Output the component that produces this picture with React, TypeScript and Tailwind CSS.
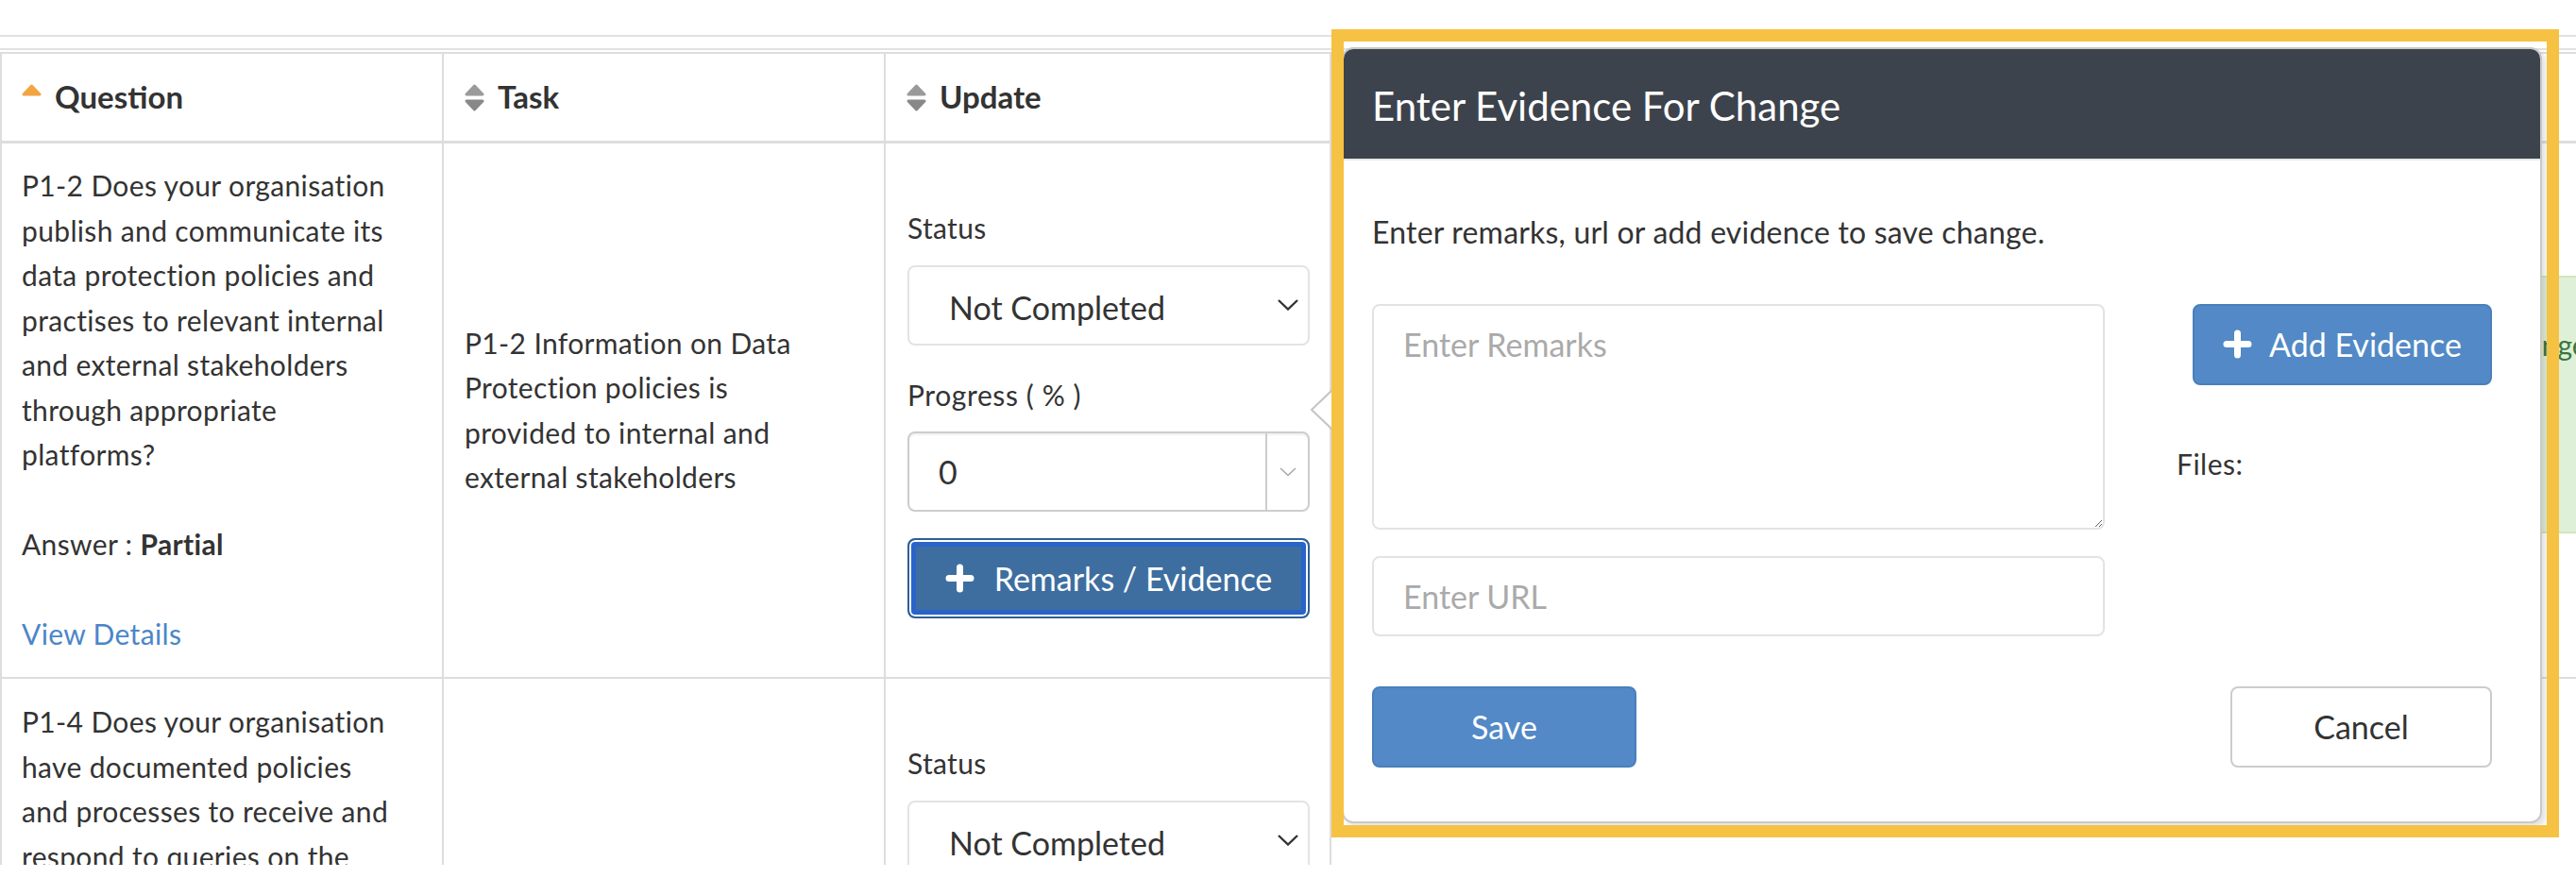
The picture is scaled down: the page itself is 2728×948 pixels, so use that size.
import * as React from 'react';

const SortIcon = ({ active }: { active?: boolean }) => (
  <svg width="21" height="29" viewBox="0 0 21 29" className="shrink-0">
    {active ? (
      <path d="M10.5 2 L19 11 H2 Z" fill="#f2a541" stroke="#f2a541" strokeWidth="3" strokeLinejoin="round" />
    ) : (
      <>
        <path d="M10.5 2 L19 11 H2 Z" fill="#9a9a9a" stroke="#9a9a9a" strokeWidth="3" strokeLinejoin="round" />
        <path d="M10.5 27 L19 18 H2 Z" fill="#888888" stroke="#888888" strokeWidth="3" strokeLinejoin="round" />
      </>
    )}
  </svg>
);

const PlusIcon = () => (
  <svg width="31" height="31" viewBox="0 0 31 31" className="shrink-0">
    <path d="M15.5 4 V27 M4 15.5 H27" stroke="#ffffff" strokeWidth="7" strokeLinecap="round" />
  </svg>
);

const StatusSelect = () => (
  <div className="h-[85px] rounded-[8px] border-2 border-[#e3e3e3] flex items-center pl-[42px] pr-[10px] text-[34px] text-[#333]">
    <span className="flex-1 pt-[4px]">Not Completed</span>
    <svg width="22" height="12" viewBox="0 0 22 12">
      <path d="M1 1 L11 10.5 L21 1" fill="none" stroke="#333" strokeWidth="2.4" />
    </svg>
  </div>
);

const UpdateCell = () => (
  <div className="pt-[66px] pl-[23px] pr-[21px]">
    <div className="text-[30px] leading-[47.5px] tracking-[0.35px]">Status</div>
    <div className="mt-[15px]">
      <StatusSelect />
    </div>
    <div className="mt-[29px] text-[30px] leading-[47.5px] tracking-[0.6px]">Progress ( % )</div>
    <div className="mt-[15px] h-[85px] rounded-[8px] border-2 border-[#cdcdcd] shadow-[inset_0_2px_2px_rgba(0,0,0,0.06)] flex">
      <div className="flex-1 flex items-center pl-[31px] text-[34px] text-[#333]">0</div>
      <div className="w-[45px] border-l-2 border-[#cdcdcd] flex items-center justify-center">
        <svg width="18" height="10" viewBox="0 0 18 10">
          <path d="M1 1 L9 8.5 L17 1" fill="none" stroke="#aaaaaa" strokeWidth="1.6" />
        </svg>
      </div>
    </div>
    <button className="mt-[28px] w-full h-[85px] rounded-[8px] border-2 border-[#2f5f94] bg-[#3e6ea0] shadow-[inset_0_0_0_2px_#ffffff,inset_0_0_0_7px_#2964c9] flex items-center justify-center gap-[21px] text-white text-[34px]">
      <PlusIcon />
      <span>Remarks / Evidence</span>
    </button>
  </div>
);

export default function App() {
  const th = 'h-[95px] border-b-[3px] border-r-2 border-[#dddddd] flex items-center gap-[14px] font-bold text-[33px] text-[#333]';
  return (
    <div className="relative w-[2728px] h-[948px] overflow-hidden bg-white font-[Lato,sans-serif] text-[#333]">
      <div className="h-[39px] border-b-2 border-[#e2e2e2]" />
      <div className="h-[14px] border-b-2 border-[#e2e2e2]" />
      <div className="h-[2px]" />

      {/* table */}
      <div className="h-[861px] overflow-hidden border-t-2 border-[#dddddd]">
        <div className="grid grid-cols-[470px_468px_472px_1fr]">
          <div className={`${th} border-l-2 pl-[21px]`}>
            <SortIcon active />
            <span>Question</span>
          </div>
          <div className={`${th} pl-[22px]`}>
            <SortIcon />
            <span>Task</span>
          </div>
          <div className={`${th} pl-[22px]`}>
            <SortIcon />
            <span>Update</span>
          </div>
          <div className={`${th} pl-[22px] border-r-0`} />

          {/* row 1 */}
          <div className="h-[567px] border-b-2 border-r-2 border-l-2 border-[#dddddd] pt-[21px] pl-[21px] pr-[48px] text-[30px] leading-[47.5px] tracking-[0.35px]">
            <p>
              P1-2 Does your organisation publish and communicate its data protection policies and practises to relevant internal and external stakeholders through appropriate platforms?
            </p>
            <p className="mt-[47.5px]">
              Answer : <span className="font-bold">Partial</span>
            </p>
            <p className="mt-[47.5px] text-[#4a86c8]">View Details</p>
          </div>
          <div className="h-[567px] border-b-2 border-r-2 border-[#dddddd] flex items-center pl-[22px] pr-[46px] text-[30px] leading-[47.5px] tracking-[0.35px]">
            <p>P1-2 Information on Data Protection policies is provided to internal and external stakeholders</p>
          </div>
          <div className="h-[567px] border-b-2 border-r-2 border-[#dddddd]">
            <UpdateCell />
          </div>
          <div className="h-[567px] border-b-2 border-[#dddddd] pt-[140px] pl-[1022px]">
            <div className="h-[273px] bg-[#dff0d8] border-2 border-[#d0e6be] pt-[48px] pl-[206px] whitespace-nowrap text-[30px] leading-[47.5px] text-[#3c763d]">
              Change
            </div>
          </div>

          {/* row 2 */}
          <div className="h-[300px] border-r-2 border-l-2 border-[#dddddd] pt-[22px] pl-[21px] pr-[48px] text-[30px] leading-[47.5px] tracking-[0.35px]">
            <p>
              P1-4 Does your organisation have documented policies and processes to receive and respond to queries on the protection of personal data?
            </p>
          </div>
          <div className="h-[300px] border-r-2 border-[#dddddd]" />
          <div className="h-[300px] border-r-2 border-[#dddddd] pt-[66px] pl-[23px] pr-[21px]">
            <div className="text-[30px] leading-[47.5px] tracking-[0.35px]">Status</div>
            <div className="mt-[15px]">
              <StatusSelect />
            </div>
          </div>
          <div className="h-[300px]" />
        </div>
      </div>

      {/* popover arrow */}
      <svg className="absolute left-[1386px] top-[411px]" width="26" height="46" viewBox="0 0 26 46">
        <path d="M26 1 L3 23 L26 45 Z" fill="#ffffff" />
        <path d="M26 1 L3 23 L26 45" fill="none" stroke="#c4c4c4" strokeWidth="2" />
      </svg>

      {/* popover */}
      <div className="absolute left-[1421px] top-[50px] w-[1271px] h-[822px] rounded-[12px] border-2 border-[#c9c9c9] bg-white shadow-[4px_4px_6px_rgba(0,0,0,0.12)]">
        <div className="h-[118px] rounded-t-[10px] bg-[#3d434c] border-b-2 border-[#e8e8e8] flex items-center pl-[30px] pt-[4px] text-white text-[42px]">
          Enter Evidence For Change
        </div>
        <div className="pl-[30px] pr-[51px]">
          <p className="pt-[52px] text-[32px] leading-[47.5px] tracking-[0.2px]">Enter remarks, url or add evidence to save change.</p>
          <div className="mt-[52px] flex">
            <div className="w-[776px]">
              <textarea
                placeholder="Enter Remarks"
                className="block w-[776px] h-[239px] rounded-[8px] border-2 border-[#e3e3e3] pl-[31px] pt-[17px] text-[34px] leading-[47.5px] placeholder:text-[#aaaaaa] outline-none"
              />
              <input
                placeholder="Enter URL"
                className="mt-[28px] block w-[776px] h-[85px] rounded-[8px] border-2 border-[#e3e3e3] pl-[31px] text-[34px] placeholder:text-[#aaaaaa] outline-none"
              />
            </div>
            <div className="flex-1 flex flex-col">
              <button className="self-end w-[317px] h-[86px] rounded-[8px] bg-[#5289c6] border-2 border-[#4a7fba] flex items-center justify-center gap-[18px] text-white text-[34px]">
                <PlusIcon />
                <span>Add Evidence</span>
              </button>
              <div className="mt-[60px] pl-[76px] text-[30px] leading-[47.5px] tracking-[0.5px]">Files:</div>
            </div>
          </div>
          <div className="mt-[53px] flex justify-between">
            <button className="w-[280px] h-[86px] rounded-[8px] bg-[#5289c6] border-2 border-[#4a7fba] text-white text-[34px]">Save</button>
            <button className="w-[277px] h-[86px] rounded-[8px] bg-white border-2 border-[#cccccc] text-[#333] text-[34px]">Cancel</button>
          </div>
        </div>
      </div>

      {/* highlight frame */}
      <div className="absolute left-[1410px] top-[31px] w-[1300px] h-[856px] border-[13px] border-[#f6c243] pointer-events-none" />
    </div>
  );
}
